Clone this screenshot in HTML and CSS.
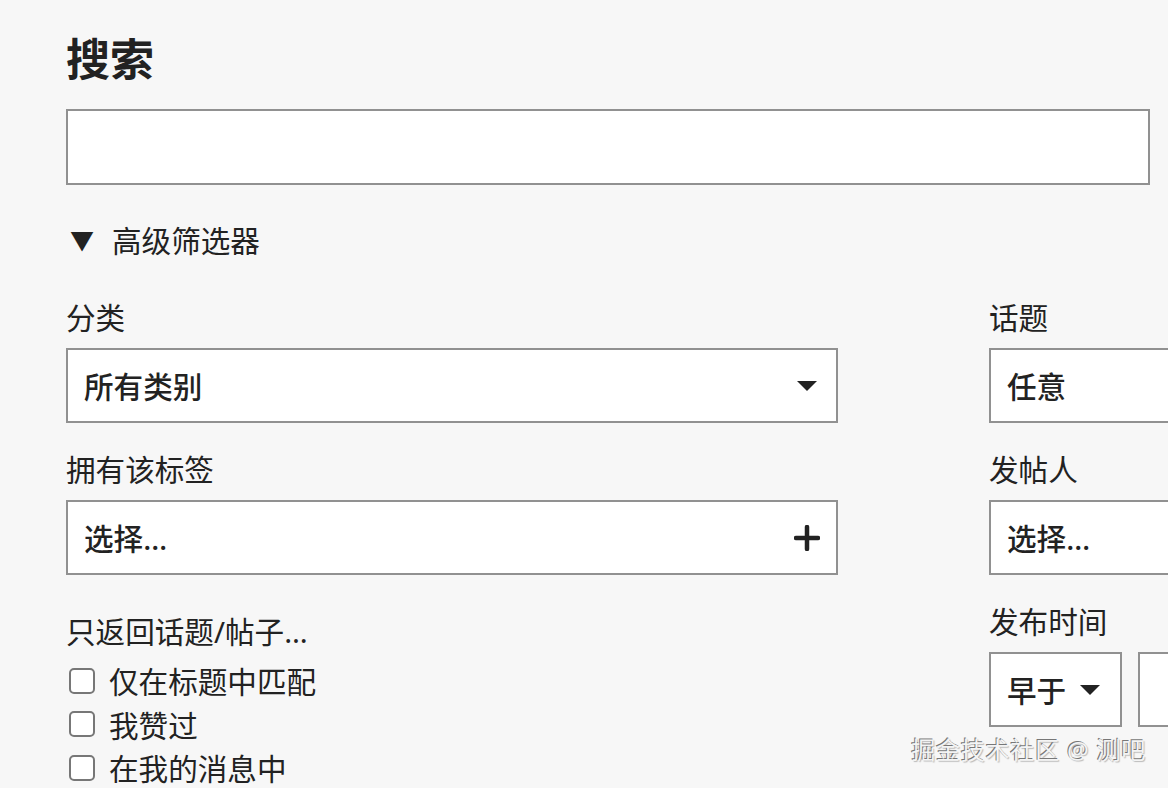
FILE: index.html
```html
<!DOCTYPE html>
<html lang="zh-CN">
<head>
<meta charset="utf-8">
<title>搜索</title>
<link rel="stylesheet" href="styles.css">
</head>
<body>
<main class="page">
  <h1 class="title">搜索</h1>
  <div class="search-box"></div>
  <div class="toggle"><span class="toggle-arrow">▼</span><span>高级筛选器</span></div>
  <div class="filters">
    <div class="col">
      <div class="field">
        <div class="label">分类</div>
        <div class="select"><span class="value">所有类别</span><span class="caret"></span></div>
      </div>
      <div class="field">
        <div class="label">拥有该标签</div>
        <div class="select"><span class="value">选择…</span>
          <svg class="plus" viewBox="0 0 26 26" width="26" height="26"><path d="M13 2v22M2 13h22" stroke="#222" stroke-width="4.5" stroke-linecap="round"/></svg>
        </div>
      </div>
      <div class="field checks">
        <div class="label">只返回话题/帖子…</div>
        <label class="check"><span class="box"></span>仅在标题中匹配</label>
        <label class="check"><span class="box"></span>我赞过</label>
        <label class="check"><span class="box"></span>在我的消息中</label>
      </div>
    </div>
    <div class="col">
      <div class="field">
        <div class="label">话题</div>
        <div class="select"><span class="value">任意</span></div>
      </div>
      <div class="field">
        <div class="label">发帖人</div>
        <div class="select"><span class="value">选择…</span></div>
      </div>
      <div class="field">
        <div class="label">发布时间</div>
        <div class="date-row">
          <div class="select small"><span class="value">早于</span><span class="caret"></span></div>
          <div class="select date"></div>
        </div>
      </div>
    </div>
  </div>
</main>
<div class="watermark">掘金技术社区 @ 测吧</div>
</body>
</html>
```

FILE: styles.css
```css
html, body {
  margin: 0;
  padding: 0;
  overflow: hidden;
  background: #f7f7f7;
}
body {
  font-family: "Noto Sans", "Noto Sans CJK SC", sans-serif;
  color: #222;
  font-size: 29.6px;
  width: 1168px;
  height: 788px;
  position: relative;
}
.page {
  padding: 26px 18px 0 66px;
}
.title {
  margin: 0;
  font-size: 44px;
  line-height: 66px;
  font-weight: 700;
}
.search-box {
  margin-top: 17px;
  height: 72px;
  background: #fff;
  border: 2px solid #919191;
}
.toggle {
  display: flex;
  align-items: center;
  margin-top: 36px;
  line-height: 40px;
}
.toggle-arrow {
  font-size: 24px;
  width: 46px;
  padding-left: 4px;
  box-sizing: border-box;
}
.filters {
  display: grid;
  grid-template-columns: 772px 772px;
  column-gap: 151px;
  margin-top: 37px;
}
.col {
  display: flex;
  flex-direction: column;
}
.field {
  margin-bottom: 27px;
}
.label {
  line-height: 40px;
  margin-bottom: 10px;
}
.select {
  height: 71px;
  background: #fff;
  border: 2px solid #919191;
  display: flex;
  align-items: center;
  justify-content: space-between;
  padding: 0 19px 0 16px;
  white-space: nowrap;
}
.value {
  font-weight: 500;
}
.caret {
  flex-shrink: 0;
  width: 0;
  height: 0;
  border-left: 10px solid transparent;
  border-right: 10px solid transparent;
  border-top: 10px solid #222;
}
.plus {
  display: block;
  margin-right: -3px;
}
.checks .label {
  margin-top: 10px;
  margin-bottom: 7px;
}
.check {
  display: flex;
  align-items: center;
  height: 43.5px;
}
.box {
  width: 22px;
  height: 22px;
  border: 2px solid #777;
  border-radius: 5px;
  background: #fff;
  margin: 0 14px 0 3px;
}
.date-row {
  display: flex;
  gap: 16px;
}
.small {
  width: 133px;
  box-sizing: border-box;
  padding: 0 20px 0 16px;
  height: 75px;
}
.small .value {
  margin-right: 12px;
}
.date {
  width: 300px;
}
.watermark {
  position: absolute;
  right: 22px;
  top: 733px;
  font-size: 24px;
  line-height: 34px;
  color: #f4f4f4;
  text-shadow: -1px -1px 0 #777, 1px 1px 1px #bbb;
  letter-spacing: 0.8px;
}
```
